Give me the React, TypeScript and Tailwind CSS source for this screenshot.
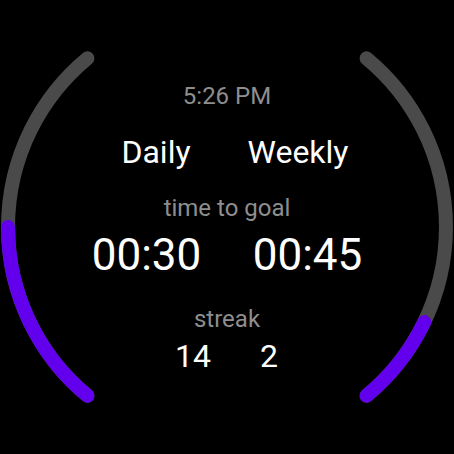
import React from 'react';

const Arcs = () => (
  <svg className="absolute inset-0" width={454} height={454} viewBox="0 0 454 454" fill="none">
    <path d="M87.4 58.3 A219 219 0 0 0 87.4 395.7" stroke="#4a4a4a" strokeWidth={14} strokeLinecap="round" />
    <path d="M8 227 A219 219 0 0 0 87.4 395.7" stroke="#6200ee" strokeWidth={14} strokeLinecap="round" />
    <path d="M366.6 58.3 A219 219 0 0 1 366.6 395.7" stroke="#4a4a4a" strokeWidth={14} strokeLinecap="round" />
    <path d="M366.6 395.7 A219 219 0 0 0 424.3 322" stroke="#6200ee" strokeWidth={14} strokeLinecap="round" />
  </svg>
);

const Pair = ({ left, right, col, className }: { left: string; right: string; col: string; className: string }) => (
  <div className={`flex justify-center text-white ${className}`}>
    <div className={`${col} text-center`}>{left}</div>
    <div className={`${col} text-center`}>{right}</div>
  </div>
);

export default function App() {
  return (
    <div
      className="relative w-[454px] h-[454px] bg-black overflow-hidden"
      style={{ fontFamily: 'Roboto, "Liberation Sans", sans-serif' }}
    >
      <Arcs />
      <div className="relative flex flex-col pt-[82px]">
        <div className="text-center text-[24px] leading-[28px] text-[#8e8e8e]">5:26 PM</div>
        <Pair left="Daily" right="Weekly" col="w-[142px]" className="mt-[24px] text-[32px] leading-[36px]" />
        <div className="mt-[24px] text-center text-[24px] leading-[28px] text-[#8e8e8e]">time to goal</div>
        <Pair left="00:30" right="00:45" col="w-[161px]" className="mt-[9px] text-[44px] leading-[48px]" />
        <div className="mt-[26px] text-center text-[24px] leading-[28px] text-[#8e8e8e]">streak</div>
        <Pair left="14" right="2" col="w-[76px]" className="mt-[5px] pl-[8px] text-[32px] leading-[36px]" />
      </div>
    </div>
  );
}
